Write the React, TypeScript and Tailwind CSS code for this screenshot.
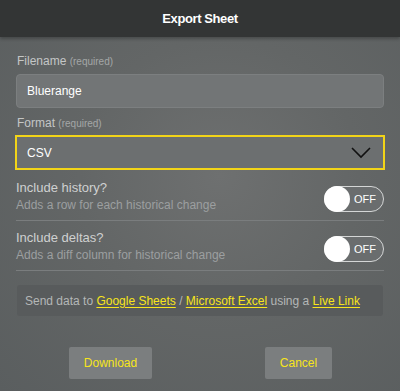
import { useState } from "react";

const font = { fontFamily: '"Liberation Sans", Arial, sans-serif' };

// Simple OFF switch
const Toggle = ({ on, onClick }: { on: boolean; onClick: () => void }) => (
  <button
    onClick={onClick}
    className="relative mt-[7px] w-[60px] h-[26px] rounded-full border border-[#d4d6d6] bg-[#6a6d6e] shrink-0"
  >
    <span
      className={`absolute top-[-1px] w-[26px] h-[26px] rounded-full bg-white ${on ? "right-[-1px]" : "left-[-1px]"}`}
    />
    <span className={`absolute top-[6px] text-[11px] leading-[12px] text-white ${on ? "left-[10px]" : "right-[7px]"}`}>
      {on ? "ON" : "OFF"}
    </span>
  </button>
);

export default function App() {
  const [history, setHistory] = useState(false);
  const [deltas, setDeltas] = useState(false);

  return (
    <div
      className="w-[400px] h-[391px] flex flex-col bg-[radial-gradient(ellipse_at_55%_45%,#6e7070_0%,#636666_45%,#5a5e5f_100%)] overflow-hidden"
      style={font}
    >
      {/* Header */}
      <div className="h-[37px] shrink-0 bg-[#333535] flex items-center justify-center shadow-[0_2px_3px_rgba(0,0,0,0.25)]">
        <span className="text-[13px] font-bold tracking-[-0.4px] text-white">Export Sheet</span>
      </div>

      <div className="flex flex-col px-[16px] pt-[16px]">
        {/* Filename */}
        <label className="text-[12px] leading-[16px] text-[#c4c6c6] pl-[1px]">
          Filename <span className="text-[10px] text-[#a4a7a7]">(required)</span>
        </label>
        <div className="mt-[4px] h-[34px] rounded-[4px] bg-[#727576] border border-[#7c7f80] flex items-center px-[10px]">
          <span className="text-[12px] text-white">Bluerange</span>
        </div>

        {/* Format */}
        <label className="mt-[7px] text-[12px] leading-[16px] text-[#c4c6c6] pl-[1px]">
          Format <span className="text-[10px] text-[#a4a7a7]">(required)</span>
        </label>
        <div className="mt-[3px] -mx-[1px] h-[35px] bg-[#6c6f70] border-[2px] border-[#f2d418] flex items-center justify-between pl-[10px] pr-[12px]">
          <span className="text-[12px] text-white">CSV</span>
          <svg width="20" height="12" viewBox="0 0 20 12" fill="none">
            <path d="M1 1 L10 10 L19 1" stroke="#111" strokeWidth="1.6" />
          </svg>
        </div>

        {/* Include history */}
        <div className="mt-[9px] flex items-start justify-between pb-[7px] border-b border-[#7a7d7e]">
          <div className="flex flex-col">
            <span className="text-[13px] leading-[18px] text-[#cfd1d1]">Include history?</span>
            <span className="text-[12px] leading-[16px] text-[#9c9fa0]">Adds a row for each historical change</span>
          </div>
          <Toggle on={history} onClick={() => setHistory(!history)} />
        </div>

        {/* Include deltas */}
        <div className="mt-[8px] flex items-start justify-between pb-[7px] border-b border-[#7a7d7e]">
          <div className="flex flex-col">
            <span className="text-[13px] leading-[18px] text-[#cfd1d1]">Include deltas?</span>
            <span className="text-[12px] leading-[16px] text-[#9c9fa0]">Adds a diff column for historical change</span>
          </div>
          <Toggle on={deltas} onClick={() => setDeltas(!deltas)} />
        </div>

        {/* Live link */}
        <div className="mt-[14px] mx-[1px] h-[31px] rounded-[3px] bg-[#585b5c] flex items-center px-[8px]">
          <p className="text-[12px] text-[#b4b7b7] whitespace-nowrap">
            Send data to{" "}
            <a className="text-[#f7e51b] underline underline-offset-2">Google Sheets</a> /{" "}
            <a className="text-[#f7e51b] underline underline-offset-2">Microsoft Excel</a> using a{" "}
            <a className="text-[#f7e51b] underline underline-offset-2">Live Link</a>
          </p>
        </div>

        {/* Actions */}
        <div className="mt-[31px] flex">
          <button className="ml-[53px] w-[83px] h-[32px] rounded-[2px] bg-[#7b7e7f] text-[12px] text-[#f7e51b]">
            Download
          </button>
          <button className="ml-[113px] w-[67px] h-[32px] rounded-[2px] bg-[#7b7e7f] text-[12px] text-[#f7e51b]">
            Cancel
          </button>
        </div>
      </div>
    </div>
  );
}
